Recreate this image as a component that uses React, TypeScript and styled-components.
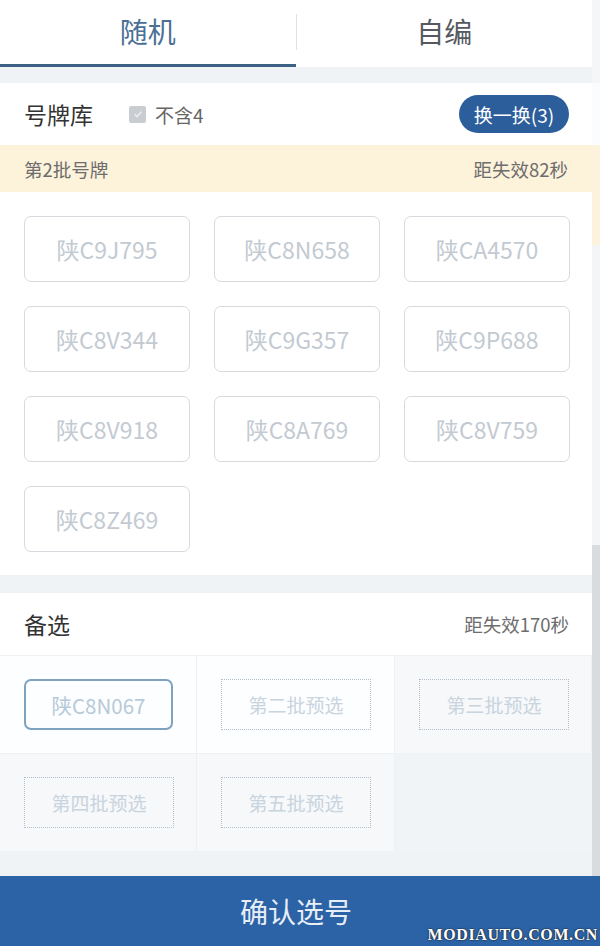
import React from "react";
import styled, { createGlobalStyle, css } from "styled-components";

const GlobalStyle = createGlobalStyle`
  html, body {
    margin: 0;
    padding: 0;
    background: #eef2f5;
  }
  body {
    font-family: "Noto Sans CJK SC", "Noto Sans", "Liberation Sans", sans-serif;
  }
`;

const Page = styled.div`
  position: relative;
  width: 600px;
  height: 946px;
  display: flex;
  overflow: hidden;
`;

const Main = styled.div`
  width: 592px;
  display: flex;
  flex-direction: column;
  background: #f0f3f6;
`;

const Side = styled.div`
  width: 8px;
  display: flex;
  flex-direction: column;
`;

const SideBlock = styled.div<{ $h: number; $bg: string }>`
  height: ${(p) => p.$h}px;
  background: ${(p) => p.$bg};
`;

const Tabs = styled.div`
  height: 67px;
  display: flex;
  align-items: stretch;
  background: #fff;
  box-sizing: border-box;
`;

const Tab = styled.div<{ $active?: boolean }>`
  flex: 1;
  display: flex;
  align-items: center;
  justify-content: center;
  padding-bottom: 3px;
  font-size: 28px;
  color: ${(p) => (p.$active ? "#4b6f95" : "#555a60")};
  border-bottom: 3px solid ${(p) => (p.$active ? "#3c6184" : "transparent")};
  box-sizing: border-box;
`;

const TabDivider = styled.div`
  width: 1px;
  margin: 14px 0 17px;
  background: #dfe3e7;
`;

const Card = styled.div`
  margin-top: 16px;
  background: #fff;
`;

const Header = styled.div`
  height: 62px;
  display: flex;
  align-items: center;
  padding: 0 23px 0 24px;
`;

const Title = styled.div`
  font-size: 23px;
  color: #333;
`;

const Check = styled.div`
  display: flex;
  align-items: center;
  gap: 9px;
  margin-left: 36px;
  font-size: 19px;
  color: #666;
`;

const Box = styled.span`
  width: 17px;
  height: 17px;
  border-radius: 2px;
  background: #c9cdd1;
  display: flex;
  align-items: center;
  justify-content: center;
`;

const Spacer = styled.div`
  flex: 1;
`;

const Pill = styled.button`
  height: 38px;
  width: 110px;
  padding: 0;
  border: none;
  border-radius: 19px;
  background: #2c5e9c;
  color: #fff;
  font-family: inherit;
  font-size: 19px;
`;

const Hint = styled.div`
  font-size: 18.5px;
  color: #6d6d6d;
`;

const Band = styled.div`
  height: 47px;
  display: flex;
  align-items: center;
  justify-content: space-between;
  padding: 0 24px;
  background: #fdf2da;
`;

const Grid = styled.div`
  display: grid;
  grid-template-columns: repeat(3, 166px);
  column-gap: 24px;
  row-gap: 24px;
  padding: 24px 23px 23px 24px;
`;

const Plate = styled.div`
  height: 66px;
  border: 1.5px solid #d6dade;
  border-radius: 7px;
  display: flex;
  align-items: center;
  justify-content: center;
  font-size: 23px;
  color: #c3cad1;
  box-sizing: border-box;
`;

const AltCard = styled.div`
  margin-top: 18px;
  background: #fff;
`;

const AltGrid = styled.div`
  display: grid;
  grid-template-columns: 197px 198px 197px;
  grid-template-rows: 98px 98px;
  background: #f0f4f7;
`;

const Cell = styled.div<{ $tone: "white" | "light" }>`
  display: flex;
  align-items: center;
  padding-left: 24px;
  background: ${(p) => (p.$tone === "white" ? "#fdfeff" : "#f6f8fa")};
  border-top: 1px solid #eef1f4;
  border-right: 1px solid #eef1f4;
  box-sizing: border-box;
`;

const Slot = styled.div<{ $picked?: boolean }>`
  width: 150px;
  height: 51px;
  display: flex;
  align-items: center;
  justify-content: center;
  box-sizing: border-box;
  ${(p) =>
    p.$picked
      ? css`
          width: 149px;
          border: 2px solid #7ea3c1;
          border-radius: 7px;
          color: #b6cad9;
          font-size: 20.5px;
        `
      : css`
          border: 1.5px dotted #b3bfca;
          color: #c8d4de;
          font-size: 19px;
        `}
`;

const Confirm = styled.div`
  margin-top: 25px;
  height: 70px;
  background: #2b63a6;
  display: flex;
  align-items: center;
  justify-content: center;
  color: #e8eef6;
  font-size: 28px;
`;

const Watermark = styled.div`
  position: absolute;
  right: 2px;
  bottom: 2px;
  font-family: "Liberation Serif", serif;
  font-weight: bold;
  font-size: 16px;
  letter-spacing: 0.6px;
  color: #fff;
  text-shadow: 0 0 2px #222, 0 0 1px #000;
`;

const plates = [
  "陕C9J795", "陕C8N658", "陕CA4570",
  "陕C8V344", "陕C9G357", "陕C9P688",
  "陕C8V918", "陕C8A769", "陕C8V759",
  "陕C8Z469",
];

const slots: { text: string; picked?: boolean; tone: "white" | "light" }[] = [
  { text: "陕C8N067", picked: true, tone: "white" },
  { text: "第二批预选", tone: "white" },
  { text: "第三批预选", tone: "light" },
  { text: "第四批预选", tone: "light" },
  { text: "第五批预选", tone: "light" },
];

export default function App() {
  return (
    <Page>
      <GlobalStyle />
      <Main>
        <Tabs>
          <Tab $active>随机</Tab>
          <TabDivider />
          <Tab>自编</Tab>
        </Tabs>
        <Card>
          <Header>
            <Title>号牌库</Title>
            <Check>
              <Box>
                <svg width="12" height="12" viewBox="0 0 12 12">
                  <path d="M2.5 6.2 L5 8.6 L9.6 3.6" stroke="#e9ebed" strokeWidth="1.6" fill="none" />
                </svg>
              </Box>
              不含4
            </Check>
            <Spacer />
            <Pill>换一换(3)</Pill>
          </Header>
          <Band>
            <Hint>第2批号牌</Hint>
            <Hint>距失效82秒</Hint>
          </Band>
          <Grid>
            {plates.map((p) => (
              <Plate key={p}>{p}</Plate>
            ))}
          </Grid>
        </Card>
        <AltCard>
          <Header>
            <Title>备选</Title>
            <Spacer />
            <Hint>距失效170秒</Hint>
          </Header>
          <AltGrid>
            {slots.map((s) => (
              <Cell key={s.text} $tone={s.tone}>
                <Slot $picked={s.picked}>{s.text}</Slot>
              </Cell>
            ))}
          </AltGrid>
        </AltCard>
        <Confirm>确认选号</Confirm>
      </Main>
      <Side>
        <SideBlock $h={83} $bg="#f4f6f8" />
        <SideBlock $h={62} $bg="#fbfcfd" />
        <SideBlock $h={100} $bg="#fdf3dc" />
        <SideBlock $h={300} $bg="#f3f5f7" />
        <SideBlock $h={331} $bg="#d9dcdf" />
        <SideBlock $h={70} $bg="#2b63a6" />
      </Side>
      <Watermark>MODIAUTO.COM.CN</Watermark>
    </Page>
  );
}
